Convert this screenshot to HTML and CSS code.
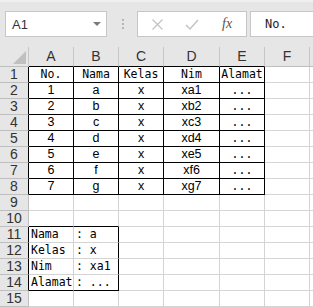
FILE: index.html
```html
<!DOCTYPE html>
<html>
<head>
    <meta charset="UTF-8">
    <title>Sheet1</title>
    <link rel="stylesheet" href="styles.css">
</head>
<body>
    <div class="formula-bar">
        <div class="name-box">
            <span>A1</span>
            <svg class="drop" width="8" height="4" viewBox="0 0 8 4"><path d="M0 0H8L4 4Z" fill="#7a7a7a"/></svg>
        </div>
        <div class="grip"><i></i><i></i><i></i></div>
        <div class="fn-box">
            <svg width="13" height="13" viewBox="0 0 13 13"><path d="M1.5 1.5L11.5 11.5M11.5 1.5L1.5 11.5" stroke="#c3c3c3" stroke-width="1.3" fill="none"/></svg>
            <svg width="14" height="13" viewBox="0 0 14 13"><path d="M1 7L5 11L13 2" stroke="#c3c3c3" stroke-width="1.5" fill="none"/></svg>
            <span class="fx">fx</span>
        </div>
        <div class="formula-input">No.</div>
    </div>

    <table class="sheet">
        <colgroup>
            <col class="c-head">
            <col class="c-std">
            <col class="c-std">
            <col class="c-std">
            <col class="c-wide">
            <col class="c-std">
            <col class="c-std">
            <col class="c-std">
        </colgroup>
        <tr class="col-heads">
            <th class="corner"><span class="tri"></span></th>
            <th class="edge-b">A</th>
            <th class="edge-b">B</th>
            <th class="edge-b">C</th>
            <th class="edge-b">D</th>
            <th class="edge-b">E</th>
            <th>F</th>
            <th></th>
        </tr>
        <tr>
            <th class="edge-r">1</th>
            <td class="box mono">No.</td>
            <td class="box mono">Nama</td>
            <td class="box mono">Kelas</td>
            <td class="box mono">Nim</td>
            <td class="box mono">Alamat</td>
            <td></td><td></td>
        </tr>
        <tr>
            <th class="edge-r">2</th>
            <td class="box">1</td><td class="box">a</td><td class="box">x</td><td class="box">xa1</td><td class="box mono">...</td>
            <td></td><td></td>
        </tr>
        <tr>
            <th class="edge-r">3</th>
            <td class="box">2</td><td class="box">b</td><td class="box">x</td><td class="box">xb2</td><td class="box mono">...</td>
            <td></td><td></td>
        </tr>
        <tr>
            <th class="edge-r">4</th>
            <td class="box">3</td><td class="box">c</td><td class="box">x</td><td class="box">xc3</td><td class="box mono">...</td>
            <td></td><td></td>
        </tr>
        <tr>
            <th class="edge-r">5</th>
            <td class="box">4</td><td class="box">d</td><td class="box">x</td><td class="box">xd4</td><td class="box mono">...</td>
            <td></td><td></td>
        </tr>
        <tr>
            <th class="edge-r">6</th>
            <td class="box">5</td><td class="box">e</td><td class="box">x</td><td class="box">xe5</td><td class="box mono">...</td>
            <td></td><td></td>
        </tr>
        <tr>
            <th class="edge-r">7</th>
            <td class="box">6</td><td class="box">f</td><td class="box">x</td><td class="box">xf6</td><td class="box mono">...</td>
            <td></td><td></td>
        </tr>
        <tr>
            <th class="edge-r">8</th>
            <td class="box">7</td><td class="box">g</td><td class="box">x</td><td class="box">xg7</td><td class="box mono">...</td>
            <td></td><td></td>
        </tr>
        <tr>
            <th>9</th>
            <td></td><td></td><td></td><td></td><td></td><td></td><td></td>
        </tr>
        <tr>
            <th>10</th>
            <td class="edge-b"></td><td class="edge-b"></td><td></td><td></td><td></td><td></td><td></td>
        </tr>
        <tr class="detail">
            <th class="edge-r">11</th>
            <td class="mono">Nama</td><td class="mono edge-r">: a</td>
            <td></td><td></td><td></td><td></td><td></td>
        </tr>
        <tr class="detail">
            <th class="edge-r">12</th>
            <td class="mono">Kelas</td><td class="mono edge-r">: x</td>
            <td></td><td></td><td></td><td></td><td></td>
        </tr>
        <tr class="detail">
            <th class="edge-r">13</th>
            <td class="mono">Nim</td><td class="mono edge-r">: xa1</td>
            <td></td><td></td><td></td><td></td><td></td>
        </tr>
        <tr class="detail">
            <th class="edge-r">14</th>
            <td class="mono edge-b">Alamat</td><td class="mono edge-r edge-b">: ...</td>
            <td></td><td></td><td></td><td></td><td></td>
        </tr>
        <tr>
            <th>15</th>
            <td></td><td></td><td></td><td></td><td></td><td></td><td></td>
        </tr>
    </table>
</body>
</html>
```

FILE: styles.css
```css
body {
    margin: 0;
    background: #fff;
    font-family: "Liberation Sans", Arial, sans-serif;
    overflow: hidden;
    width: 313px;
    height: 307px;
}
.formula-bar {
    display: flex;
    align-items: flex-start;
    height: 47px;
    box-sizing: border-box;
    padding: 9px 0 0 5px;
    background: #e6e6e6;
    border-top: 2px solid #f0f0f0;
}
.name-box {
    display: flex;
    align-items: center;
    justify-content: space-between;
    width: 102px;
    height: 26px;
    box-sizing: border-box;
    padding: 0 5px 0 6px;
    background: #fff;
    border: 1px solid #c6c6c6;
    font-size: 13px;
    color: #333;
}
.grip {
    display: flex;
    flex-direction: column;
    gap: 2px;
    margin: 8px 0 0 15px;
}
.grip i {
    display: block;
    width: 2px;
    height: 2px;
    background: #b5b5b5;
}
.fn-box {
    display: flex;
    align-items: center;
    width: 110px;
    height: 26px;
    box-sizing: border-box;
    margin-left: 13px;
    padding-left: 13px;
    gap: 21px;
    background: #fff;
    border: 1px solid #c6c6c6;
}
.fx {
    font-family: "Liberation Serif", serif;
    font-style: italic;
    font-size: 14px;
    color: #555;
    margin-left: 2px;
}
.formula-input {
    flex: 1;
    height: 26px;
    box-sizing: border-box;
    margin-left: 3px;
    padding-left: 14px;
    background: #fff;
    border: 1px solid #c6c6c6;
    border-right: none;
    font-family: "DejaVu Sans Mono", monospace;
    font-size: 12px;
    line-height: 24px;
    color: #222;
}
.sheet {
    table-layout: fixed;
    border-collapse: separate;
    border-spacing: 0;
    width: 355px;
}
.c-head { width: 29px; }
.c-std { width: 45px; }
.c-wide { width: 56px; }
.sheet th, .sheet td {
    box-sizing: border-box;
    height: 16px;
    padding: 0;
    border-right: 1px solid #d4d4d4;
    border-bottom: 1px solid #d4d4d4;
    text-align: center;
    vertical-align: middle;
    white-space: nowrap;
    overflow: hidden;
    line-height: 15px;
}
.sheet td {
    font-size: 12.5px;
    color: #000;
}
.sheet th {
    background: #e6e6e6;
    border-color: #bfbfbf;
    font-weight: normal;
    font-size: 14px;
    color: #333;
}
.col-heads th {
    height: 20px;
    border-right-color: #c6c6c6;
    border-bottom-color: #bfbfbf;
}
.corner {
    position: relative;
}
.tri {
    position: absolute;
    right: 2px;
    bottom: 2px;
    width: 0;
    height: 0;
    border-left: 13px solid transparent;
    border-bottom: 13px solid #c0c0c0;
}
.mono {
    font-family: "DejaVu Sans Mono", monospace;
}
.sheet td.mono {
    font-size: 11.5px;
}
.detail td {
    text-align: left;
    padding-left: 2px;
}
.sheet .box {
    border-right-color: #000;
    border-bottom-color: #000;
}
.sheet .edge-b {
    border-bottom-color: #000;
}
.sheet .edge-r {
    border-right-color: #000;
}
```
